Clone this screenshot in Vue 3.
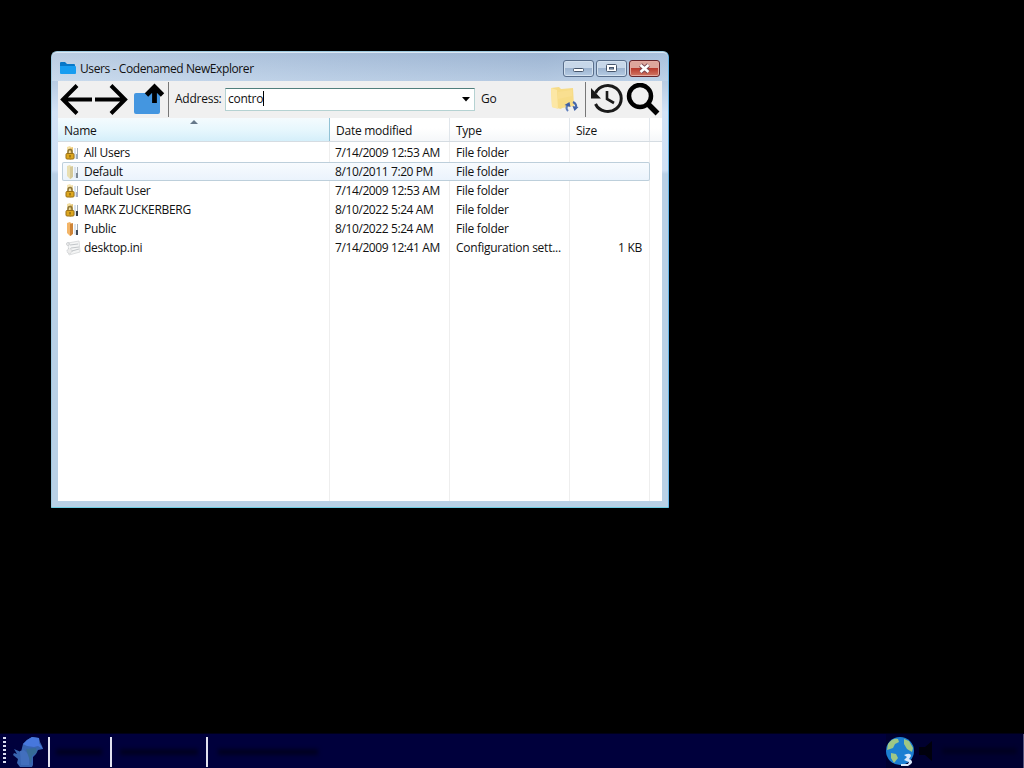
<template>
  <div class="desktop">
    <div class="workspace">
      <section class="window">
        <header class="titlebar">
          <svg class="title-icon" viewBox="0 0 16 14">
            <path d="M0 2q0-1 1-1h4l2 2h7q1 0 1 1v8H1q-1 0-1-1z" fill="#0878c8" />
            <path d="M0 5h15q1 0 1 1v6q0 1-1 1H1q-1 0-1-1z" fill="#189df0" />
          </svg>
          <h1 class="title">Users - Codenamed NewExplorer</h1>
          <div class="controls">
            <button class="control">
              <svg viewBox="0 0 31 17">
                <rect x="10.5" y="8.5" width="10" height="3" rx="1" fill="#fff" stroke="#46566c" />
              </svg>
            </button>
            <button class="control">
              <svg viewBox="0 0 31 17">
                <rect x="10.5" y="4.500" width="10" height="7" rx="1" fill="#fff" stroke="#46566c" />
                <rect x="13.500" y="7.500" width="4" height="1.500" fill="#9db4d2" stroke="#46566c" />
              </svg>
            </button>
            <button class="control close">
              <svg viewBox="0 0 31 17">
                <path d="M11.500 5l8 7M19.500 5l-8 7" stroke="#7a4650" stroke-width="4.400" />
                <path d="M11.500 5l8 7M19.500 5l-8 7" stroke="#fff" stroke-width="2.600" />
              </svg>
            </button>
          </div>
        </header>

        <div class="client">
          <nav class="toolbar">
            <svg class="arrow" viewBox="0 0 34 36">
              <path d="M32 17.500H3M17 3.500L3 17.500l14 14" class="stroke" />
            </svg>
            <svg class="arrow" viewBox="0 0 34 36">
              <path d="M0 17.500h30M16 3.500l14 14-14 14" class="stroke" />
            </svg>
            <svg class="up" viewBox="0 0 36 36">
              <path d="M4 13q0-2 2-2h22q2 0 2 2v17q0 2-2 2H6q-2 0-2-2z" fill="#4496e0" />
              <path d="M24.500 21V6M16.500 13l8-8 8 8" fill="none" stroke="#000" stroke-width="4.800" />
            </svg>
            <span class="divider"></span>
            <label class="address-label">Address:</label>
            <div class="address">
              <span class="address-text">contro</span><span class="caret"></span>
              <svg class="drop" viewBox="0 0 8 5"><path d="M0 0h8L4 4.500z" /></svg>
            </div>
            <span class="go">Go</span>
            <svg class="sync" viewBox="0 0 30 28">
              <path d="M2 3l8-1 2 2 12-1 1 18-12 2-1 1-9-2z" fill="#f7dc87" />
              <path d="M2 3l6 2 1 19-6-2z" fill="#fce7a5" />
              <path d="M9 7l14-2v6L9 14z" fill="#f9df90" />
              <path d="M19 26q-3-3 0-6" fill="none" stroke="#5f7fbd" stroke-width="2" />
              <path d="M15.500 20l5-3 1 5zM29.500 22l-4 4-2-5z" fill="#3e5fa6" />
              <path d="M24 17q4 2 3 6" fill="none" stroke="#4668aa" stroke-width="2" />
            </svg>
            <span class="divider second"></span>
            <svg class="history" viewBox="0 0 34 34">
              <path d="M5.500 10A13.500 13 0 1 1 5.500 21" fill="none" stroke="#1a1a1a" stroke-width="3" />
              <path d="M1 5v10.500h10z" fill="#1a1a1a" />
              <path d="M17 8v8l7 4" fill="none" stroke="#1a1a1a" stroke-width="2.600" />
            </svg>
            <svg class="search" viewBox="0 0 34 34">
              <circle cx="14" cy="13" r="11" fill="none" stroke="#000" stroke-width="4.500" />
              <path d="M21.500 20.500l10 10" stroke="#000" stroke-width="5.500" />
            </svg>
          </nav>

          <div class="row head">
            <div class="cell name sorted">
              <svg class="sort" viewBox="0 0 8 4"><path d="M0 4l4-4 4 4z" fill="#66788a" /></svg>
              Name
            </div>
            <div class="cell date">Date modified</div>
            <div class="cell type">Type</div>
            <div class="cell size">Size</div>
          </div>

          <div class="list">
            <div
              v-for="file in files"
              :key="file.name"
              class="row item"
              :class="{ hover: file.hover }"
            >
              <div class="cell name">
                <svg v-if="file.icon === 'ini'" class="icon" viewBox="0 0 16 16">
                  <path d="M3 3l11-2 1 11-11 3z" fill="#f4f5f5" stroke="#dcdedf" />
                  <path d="M5 5l8-1M6 8l8-1M7 11l7-2" stroke="#c2c6c9" />
                  <circle cx="4.500" cy="11" r="2.500" fill="#ececec" stroke="#c4c7ca" stroke-dasharray="1" />
                  <circle cx="3" cy="4" r="1.500" fill="none" stroke="#cfd1d3" />
                </svg>
                <svg v-else class="icon" viewBox="0 0 16 16">
                  <path d="M2 2l3-1 2 2v11l-2 1-3-3z" :fill="file.front" />
                  <path d="M5 3l3-1v11l-3 2z" :fill="file.back" />
                  <path d="M9 3h2v11l-2-1z" fill="#dce5ee" />
                  <path d="M12.500 3v8" stroke="#a5b0bc" />
                  <path d="M12 9v5" :stroke="file.tip" stroke-width="2" />
                  <g v-if="file.icon === 'locked'">
                    <path d="M3 9V7q0-2.500 2-2.500T7 7v2" fill="none" stroke="#8d7638" stroke-width="1.500" />
                    <rect x="1" y="8.500" width="8" height="5.500" rx="1" fill="#dda720" stroke="#9a7014" />
                    <path d="M5 10v2.500" stroke="#6d4f0d" />
                  </g>
                </svg>
                <span>{{ file.name }}</span>
              </div>
              <div class="cell date">{{ file.date }}</div>
              <div class="cell type">{{ file.type }}</div>
              <div class="cell size">{{ file.size }}</div>
            </div>
          </div>
        </div>
      </section>
    </div>

    <footer class="taskbar">
      <span class="grip"></span>
      <svg class="start" viewBox="0 0 34 31">
        <path d="M12 8l4-4 5-3 7 1 1 4 2 4 1 3-5 1-2 4-3 3v8l-1 2H9l-3-4 1-4-5-4 1-2 3 1-3-5 7 3z" fill="#3864b0" />
        <path d="M12 8l4-4 5-3 7 1v5l4 6-5-3-4 1-7-1z" fill="#4777dc" />
        <path d="M9 15l4-1 5 5v10h-8z" fill="#426fbd" />
        <path d="M15 13l10-1 1 4-5 4-1 8-3-9z" fill="#366b96" />
      </svg>
      <div class="task first"><span class="faded"></span></div>
      <div class="task second-task"><span class="faded"></span></div>
      <div class="task third"><span class="faded"></span></div>
      <div class="tray">
        <svg class="globe" viewBox="0 0 30 30">
          <circle cx="14" cy="14" r="14" fill="#1c7fd2" />
          <path d="M2 7q4-6 10-5l1 3-4 2-2 4-3 1-3 1zM5 16l5 1 2 4-4 5-3-5zM18 2l5 2 4 7-1 4-5-3-3-5z" fill="#9fc786" />
          <path d="M18 18q7-3 7 1l-2 3q5 2 2 5l-3 2H15v-2h7l1-2-5-2 3-3z" fill="#d9e8fb" />
        </svg>
        <svg class="speaker" viewBox="0 0 18 22"><path d="M1 7h6l7-6v20l-7-6H1z" fill="#00000c" /></svg>
        <span class="faded clock"></span>
      </div>
    </footer>
  </div>
</template>

<script setup>
import { ref } from "vue";

const files = ref([
  { name: "All Users", date: "7/14/2009 12:53 AM", type: "File folder", icon: "locked", front: "#f5dfa0", back: "#edc772", tip: "#9cabba" },
  { name: "Default", date: "8/10/2011 7:20 PM", type: "File folder", icon: "folder", front: "#e9dfb2", back: "#d4c898", tip: "#7c8894", hover: true },
  { name: "Default User", date: "7/14/2009 12:53 AM", type: "File folder", icon: "locked", front: "#f5e5b5", back: "#eedba7", tip: "#a7adc5" },
  { name: "MARK ZUCKERBERG", date: "8/10/2022 5:24 AM", type: "File folder", icon: "locked", front: "#f2dda1", back: "#dfc174", tip: "#353d49" },
  { name: "Public", date: "8/10/2022 5:24 AM", type: "File folder", icon: "folder", front: "#f3b568", back: "#cd8438", tip: "#414c5c" },
  { name: "desktop.ini", date: "7/14/2009 12:41 AM", type: "Configuration sett...", size: "1 KB", icon: "ini" },
]);
</script>

<style>
body {
  margin: 0;
  background: #000;
}
</style>

<style scoped>
* {
  box-sizing: border-box;
}

svg {
  display: block;
  flex-shrink: 0;
}

.desktop {
  width: 1024px;
  height: 768px;
  display: flex;
  flex-direction: column;
  overflow: hidden;
  background: #000;
  color: #111;
  font: 12px/18px "Open Sans", "Noto Sans", sans-serif;
  letter-spacing: -0.25px;
  white-space: nowrap;
}

.workspace {
  flex: 1;
  padding: 51px 0 0 51px;
}

.window {
  width: 618px;
  height: 457px;
  padding: 0 6px 6px;
  border: 1px solid #9fc9df;
  border-right-color: #65b5e7;
  border-bottom-color: #6dcde2;
  border-radius: 6px 6px 1px 1px;
  background: linear-gradient(#a0b6d2 0, #b8cce3 30px, #d3e3f6 60px, #cfe0f5 118px, #b9d0e6 122px, #b9d1e6 100%);
}

.titlebar {
  height: 29px;
  margin: 0 -6px;
  padding: 3px 8px 0;
  display: flex;
  align-items: center;
  border-top: 1px solid #dce8f3;
  border-radius: 5px 5px 0 0;
  background:
    linear-gradient(rgba(160, 182, 210, 0.3), rgba(205, 222, 240, 0.5)),
    linear-gradient(90deg, #c6d7e9, #abc1dc 45%, #9cb4d2 80%, #adc6e1);
}

.title-icon {
  width: 16px;
  height: 14px;
  margin-top: -1px;
}

.title {
  margin: 0 0 0 4px;
  font-size: 12px;
  font-weight: 400;
  letter-spacing: -0.4px;
}

.controls {
  display: flex;
  gap: 2px;
  margin-left: auto;
}

.control {
  width: 31px;
  height: 17px;
  padding: 0;
  border: 1px solid #596e8b;
  border-radius: 3px;
  background: linear-gradient(#c7d7e9 45%, #9db4d0 50%, #b5cbe3);
  box-shadow: inset 0 0 0 1px #d3e1ef;
}

.control svg {
  width: 31px;
  height: 17px;
  margin: -1px;
}

.close {
  border-color: #65252b;
  background: linear-gradient(#dda69c 45%, #b93b2e 50%, #d17865);
  box-shadow: inset 0 0 0 1px #e4aaa1;
}

.client {
  height: 420px;
  display: flex;
  flex-direction: column;
  background: #fff;
}

.toolbar {
  height: 37px;
  flex-shrink: 0;
  display: flex;
  align-items: center;
  padding-left: 2px;
  background: #f0f0f0;
}

.arrow {
  width: 34px;
  height: 36px;
  margin-right: 1px;
}

.stroke {
  fill: none;
  stroke: #000;
  stroke-width: 4;
}

.up {
  width: 36px;
  height: 36px;
}

.divider {
  width: 1px;
  height: 35px;
  margin-left: 2px;
  background: #777;
}

.address-label {
  width: 50px;
  margin: -2px 0 0 6px;
}

.address {
  width: 250px;
  height: 23px;
  display: flex;
  align-items: center;
  padding: 0 4px 0 2px;
  border: 1px solid #b5d2d2;
  border-top-color: #517f7c;
  background: #fff;
}

.address-text {
  margin-top: -2px;
}

.caret {
  width: 1px;
  height: 15px;
  margin-top: -2px;
  background: #000;
}

.drop {
  width: 8px;
  height: 5px;
  margin-left: auto;
}

.go {
  width: 16px;
  margin: -2px 0 0 6px;
}

.sync {
  width: 30px;
  height: 28px;
  margin: -2px 0 0 52px;
}

.divider.second {
  margin-left: 6px;
}

.history {
  width: 34px;
  height: 34px;
  margin-left: 4px;
}

.search {
  width: 34px;
  height: 34px;
  margin-left: 2px;
}

.row {
  display: grid;
  grid-template-columns: 272px 120px 120px 80px;
}

.head {
  height: 24px;
  flex-shrink: 0;
  border-bottom: 1px solid #d5dce2;
  background: linear-gradient(#fff 45%, #f5f7f9);
}

.head .cell {
  height: 23px;
  padding: 4px 6px 0;
  border-right: 1px solid #e1e6eb;
}

.head .sorted {
  position: relative;
  border-right-color: #91c2d5;
  background: linear-gradient(#f4fbfe, #e7f7fd 50%, #d5effa);
}

.sort {
  position: absolute;
  top: 2px;
  left: 132px;
  width: 8px;
  height: 4px;
}

.list {
  flex: 1;
  padding: 1px 0 0 4px;
  /* Column rules run all the way down below the rows */
  background:
    linear-gradient(#eee, #eee) 271px 0 / 1px 100% no-repeat,
    linear-gradient(#eee, #eee) 391px 0 / 1px 100% no-repeat,
    linear-gradient(#eee, #eee) 511px 0 / 1px 100% no-repeat,
    linear-gradient(#eee, #eee) 591px 0 / 1px 100% no-repeat;
}

.item {
  width: 588px;
  height: 19px;
  grid-template-columns: 268px 120px 120px 80px;
  line-height: 20px;
}

.item .cell {
  height: 19px;
  padding-left: 6px;
}

.item .date {
  padding-left: 5px;
  letter-spacing: -0.4px;
}

.item .name {
  display: flex;
  align-items: flex-start;
  padding-left: 3px;
  letter-spacing: -0.3px;
}

.icon {
  width: 16px;
  height: 16px;
  margin: 2px 3px 0 0;
}

.item .size {
  padding-right: 8px;
  text-align: right;
}

.hover {
  border-radius: 2px;
  background: linear-gradient(#f8fbfe, #eaf3fc);
  box-shadow: inset 0 0 0 1px #bdcfdb;
}

.taskbar {
  height: 35px;
  display: flex;
  background: #00003c;
  border-top: 1px solid #000018;
}

.grip {
  width: 3px;
  height: 28px;
  margin: 3px 0 0 3px;
  background: repeating-linear-gradient(#d8dcf0 0 2px, #00003c 2px 4px);
}

.start {
  width: 34px;
  height: 31px;
  margin: 2px 0 0 5px;
}

.task {
  display: flex;
  align-items: center;
  margin-top: 3px;
  height: 30px;
  border-left: 2px solid #e1e1ef;
}

.first {
  width: 62px;
  margin-left: 3px;
  padding-left: 6px;
}

.second-task {
  width: 96px;
  padding-left: 8px;
}

.third {
  width: 230px;
  padding-left: 10px;
}

.faded {
  width: 46px;
  height: 6px;
  background: #000020;
  filter: blur(2px);
}

.second-task .faded {
  width: 78px;
}

.third .faded {
  width: 100px;
}

.tray {
  width: 138px;
  display: flex;
  align-items: center;
  margin-left: auto;
  background: #000030;
  border-right: 1px solid #55557c;
}

.globe {
  width: 30px;
  height: 30px;
  margin-top: 2px;
}

.speaker {
  width: 18px;
  height: 22px;
  margin-left: 2px;
}

.faded.clock {
  width: 75px;
  margin-left: 6px;
}
</style>
